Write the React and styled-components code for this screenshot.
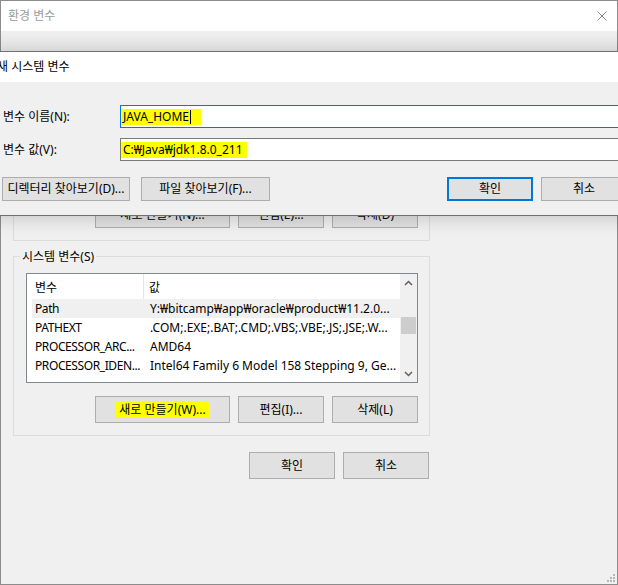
import React from "react";
import styled, { createGlobalStyle } from "styled-components";

const GlobalStyle = createGlobalStyle`
  html, body {
    margin: 0;
    padding: 0;
    background: #f0f0f0;
  }
  body {
    font-family: "Noto Sans", "Noto Sans CJK KR", sans-serif;
    font-size: 12px;
    color: #000;
  }
  * {
    box-sizing: border-box;
  }
`;

const userVars = [
  { name: "OneDrive", value: "C:₩Users₩user₩OneDrive" },
  { name: "Path", value: "C:₩Users₩user₩AppData₩Local₩Microsoft₩..." },
  { name: "TEMP", value: "C:₩Users₩user₩AppData₩Local₩Temp" },
  { name: "TMP", value: "C:₩Users₩user₩AppData₩Local₩Temp" },
];

const systemVars = [
  { name: "Path", value: "Y:₩bitcamp₩app₩oracle₩product₩11.2.0...", selected: true },
  { name: "PATHEXT", value: ".COM;.EXE;.BAT;.CMD;.VBS;.VBE;.JS;.JSE;.W..." },
  { name: "PROCESSOR_ARC...", value: "AMD64" },
  { name: "PROCESSOR_IDEN...", value: "Intel64 Family 6 Model 158 Stepping 9, Ge..." },
];

const CloseIcon = () => (
  <svg width="10" height="10" viewBox="0 0 10 10">
    <path d="M0.5 0.5L9.5 9.5M9.5 0.5L0.5 9.5" stroke="#8a8a8a" strokeWidth="1" fill="none" />
  </svg>
);

const Chevron = ({ down }) => (
  <svg width="9" height="6" viewBox="0 0 9 6">
    <path
      d={down ? "M1 1L4.5 4.5L8 1" : "M1 5L4.5 1.5L8 5"}
      stroke="#606060"
      strokeWidth="1.5"
      fill="none"
    />
  </svg>
);

const Grip = () => (
  <svg width="8" height="8" viewBox="0 0 8 8">
    <g fill="#b8b8b8">
      <rect x="6" y="0" width="2" height="2" />
      <rect x="3" y="3" width="2" height="2" />
      <rect x="6" y="3" width="2" height="2" />
      <rect x="0" y="6" width="2" height="2" />
      <rect x="3" y="6" width="2" height="2" />
      <rect x="6" y="6" width="2" height="2" />
    </g>
  </svg>
);

const VarList = ({ rows }) => (
  <ListBox>
    <ListContent>
      <HeaderRow>
        <HeaderCell $pad={8} $divider>변수</HeaderCell>
        <HeaderCell $pad={5}>값</HeaderCell>
      </HeaderRow>
      {rows.map((r) => (
        <Row key={r.name} $selected={r.selected}>
          <Cell $pad={3} $tight>{r.name}</Cell>
          <Cell $pad={3}>{r.value}</Cell>
        </Row>
      ))}
    </ListContent>
    <ScrollBar>
      <ScrollArrow>
        <Chevron />
      </ScrollArrow>
      <ScrollTrack>
        <Thumb />
      </ScrollTrack>
      <ScrollArrow>
        <Chevron down />
      </ScrollArrow>
    </ScrollBar>
  </ListBox>
);

const App = () => {
  return (
    <Desktop>
      <GlobalStyle />
      <Window>
        <TitleBar $inactive>
          <span>환경 변수</span>
          <CloseIcon />
        </TitleBar>
        <WindowBody>
          <GroupBox>
            <GroupLabel>사용자 변수(U)</GroupLabel>
            <VarList rows={userVars} />
            <ButtonRow>
              <Button $w={135} $h={27}>새로 만들기(N)...</Button>
              <Button $w={86} $h={27}>편집(E)...</Button>
              <Button $w={86} $h={27}>삭제(D)</Button>
            </ButtonRow>
          </GroupBox>
          <GroupBox>
            <GroupLabel>시스템 변수(S)</GroupLabel>
            <VarList rows={systemVars} />
            <ButtonRow>
              <Button $w={135} $h={27}>
                <Marker $l={3} $r={4}>새로 만들기(W)...</Marker>
              </Button>
              <Button $w={86} $h={27}>편집(I)...</Button>
              <Button $w={86} $h={27}>삭제(L)</Button>
            </ButtonRow>
          </GroupBox>
          <FooterRow>
            <Button $w={86} $h={27}>확인</Button>
            <Button $w={86} $h={27}>취소</Button>
          </FooterRow>
        </WindowBody>
        <GripCorner>
          <Grip />
        </GripCorner>
      </Window>

      <Dialog>
        <TitleBar>
          <span>새 시스템 변수</span>
        </TitleBar>
        <DialogBody>
          <FieldLabel>변수 이름(N):</FieldLabel>
          <Input $focused>
            <Marker $l={2} $r={10}>
              JAVA_HOME
              <Caret />
            </Marker>
          </Input>
          <FieldLabel>변수 값(V):</FieldLabel>
          <Input>
            <Marker $l={2} $r={4}>C:₩Java₩jdk1.8.0_211</Marker>
          </Input>
          <DialogButtons>
            <ButtonGroup $gap={11}>
              <Button $w={128} $h={24}>디렉터리 찾아보기(D)...</Button>
              <Button $w={129} $h={24}>파일 찾아보기(F)...</Button>
            </ButtonGroup>
            <ButtonGroup $gap={8}>
              <Button $w={86} $h={24} $default>확인</Button>
              <Button $w={86} $h={24}>취소</Button>
            </ButtonGroup>
          </DialogButtons>
        </DialogBody>
      </Dialog>
    </Desktop>
  );
};

const Desktop = styled.div`
  position: relative;
  width: 618px;
  height: 585px;
  overflow: hidden;
  background: #f0f0f0;
`;

const Window = styled.div`
  position: relative;
  width: 618px;
  height: 585px;
  border: 1px solid #8c8c8c;
  background: #f0f0f0;
  display: flex;
  flex-direction: column;
`;

const TitleBar = styled.div`
  height: 30px;
  flex-shrink: 0;
  background: #fff;
  display: flex;
  align-items: center;
  justify-content: space-between;
  padding: 0 10px 0 7px;
  line-height: 16px;
  white-space: nowrap;
  color: ${(p) => (p.$inactive ? "#9b9b9b" : "#000")};
`;

const WindowBody = styled.div`
  display: flex;
  flex-direction: column;
  gap: 15px;
  padding: 30px 0 0 12px;
`;

const GroupBox = styled.div`
  position: relative;
  width: 417px;
  height: 180px;
  border: 1px solid #dcdcdc;
  padding: 16px 11px 12px 12px;
  display: flex;
  flex-direction: column;
`;

const GroupLabel = styled.span`
  position: absolute;
  top: -8px;
  left: 6px;
  padding: 0 2px;
  line-height: 16px;
  background: #f0f0f0;
  white-space: nowrap;
`;

const ListBox = styled.div`
  height: 110px;
  flex-shrink: 0;
  border: 1px solid #828790;
  background: #fff;
  display: grid;
  grid-template-columns: 1fr 17px;
  overflow: hidden;
`;

const ListContent = styled.div`
  overflow: hidden;
`;

const HeaderRow = styled.div`
  height: 25px;
  display: grid;
  grid-template-columns: 117px 1fr;
`;

const HeaderCell = styled.div`
  display: flex;
  align-items: center;
  padding-left: ${(p) => p.$pad}px;
  border-right: ${(p) => (p.$divider ? "1px solid #e5e5e5" : "none")};
  white-space: nowrap;
  overflow: hidden;
`;

const Row = styled.div`
  height: 19px;
  margin-left: 5px;
  display: grid;
  grid-template-columns: 115px 1fr;
  align-items: center;
  background: ${(p) => (p.$selected ? "#f0f0f0" : "transparent")};
`;

const Cell = styled.div`
  padding-left: ${(p) => p.$pad}px;
  line-height: 19px;
  white-space: nowrap;
  overflow: hidden;
  letter-spacing: ${(p) => (p.$tight ? "-0.4px" : "0")};
`;

const ScrollBar = styled.div`
  background: #f0f0f0;
  display: flex;
  flex-direction: column;
`;

const ScrollArrow = styled.div`
  height: 17px;
  flex-shrink: 0;
  display: flex;
  align-items: center;
  justify-content: center;
`;

const ScrollTrack = styled.div`
  flex: 1;
  padding: 26px 1px 0;
`;

const Thumb = styled.div`
  height: 17px;
  background: #cdcdcd;
`;

const ButtonRow = styled.div`
  display: flex;
  justify-content: flex-end;
  gap: 8px;
  margin-top: 13px;
`;

const FooterRow = styled.div`
  width: 417px;
  display: flex;
  justify-content: flex-end;
  gap: 8px;
  padding-right: 1px;
  margin-top: 1px;
`;

const Button = styled.button`
  width: ${(p) => p.$w}px;
  height: ${(p) => p.$h}px;
  flex-shrink: 0;
  padding: 0;
  margin: 0;
  font: inherit;
  color: #000;
  line-height: 16px;
  white-space: nowrap;
  background: #e1e1e1;
  border: ${(p) => (p.$default ? "2px solid #0078d7" : "1px solid #adadad")};
  display: flex;
  align-items: center;
  justify-content: center;
`;

const Marker = styled.span`
  display: inline-flex;
  align-items: center;
  height: 16px;
  background: #ffff00;
  padding: 0 ${(p) => p.$r}px 0 ${(p) => p.$l}px;
  margin-left: -${(p) => p.$l}px;
  margin-right: -${(p) => p.$r}px;
`;

const Caret = styled.span`
  display: inline-block;
  width: 1px;
  height: 14px;
  margin-left: 1px;
  background: #000;
`;

const GripCorner = styled.div`
  position: absolute;
  right: 2px;
  bottom: 2px;
  display: flex;
`;

const Dialog = styled.div`
  position: absolute;
  top: 51px;
  left: -11px;
  width: 651px;
  border: 1px solid #707070;
  background: #f0f0f0;
  box-shadow: 0 0 20px rgba(0, 0, 0, 0.22);
  display: flex;
  flex-direction: column;
`;

const DialogBody = styled.div`
  display: grid;
  grid-template-columns: 117px 1fr;
  row-gap: 10px;
  align-items: center;
  padding: 23px 12px 14px 13px;
`;

const FieldLabel = styled.label`
  white-space: nowrap;
  line-height: 16px;
`;

const Input = styled.div`
  height: 23px;
  background: #fff;
  border: 1px solid ${(p) => (p.$focused ? "#0078d7" : "#7a7a7a")};
  padding-left: 2px;
  display: flex;
  align-items: center;
  white-space: nowrap;
`;

const DialogButtons = styled.div`
  grid-column: 1 / -1;
  display: flex;
  justify-content: space-between;
  margin: 6px 0 0 -1px;
`;

const ButtonGroup = styled.div`
  display: flex;
  gap: ${(p) => p.$gap}px;
`;

export default App;
